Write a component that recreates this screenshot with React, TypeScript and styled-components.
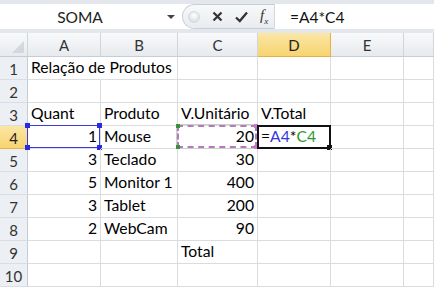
import React from "react";
import styled, { createGlobalStyle, css } from "styled-components";

const GlobalStyle = createGlobalStyle`
  html, body { margin: 0; padding: 0; background: #fff; }
  body { font-family: Lato, "Liberation Sans", sans-serif; overflow: hidden; }
`;

const Window = styled.div`
  width: 434px;
  height: 287px;
  overflow: hidden;
  background: #fff;
`;

const FormulaBar = styled.div`
  display: flex;
  align-items: stretch;
  height: 25px;
  border-top: 4px solid #e3e7ec;
  border-bottom: 4px solid #e3e7ec;
  background: #fff;
`;

const NameBox = styled.div`
  width: 160px;
  display: flex;
  align-items: center;
  justify-content: center;
  font-size: 15.5px;
  color: #222;
`;

const DropArrow = styled.div`
  width: 22px;
  display: flex;
  align-items: center;
  justify-content: center;
  &::after {
    content: "";
    border-left: 4px solid transparent;
    border-right: 4px solid transparent;
    border-top: 4px solid #444;
  }
`;

const ButtonGroup = styled.div`
  width: 92px;
  flex-shrink: 0;
  display: flex;
  align-items: center;
  gap: 12px;
  padding-left: 5px;
  background: linear-gradient(#f7f8fa, #e9ecf0);
  border: 1px solid #c9ced6;
  border-right: none;
  border-radius: 13px 0 0 13px;
  box-sizing: border-box;
`;

const Grip = styled.span`
  width: 10px;
  height: 10px;
  flex-shrink: 0;
  border-radius: 50%;
  background: radial-gradient(circle at 50% 35%, #fff, #cfd4da);
  border: 1px solid #d5d9df;
`;

const FxText = styled.span`
  font-family: "Liberation Serif", serif;
  font-style: italic;
  font-size: 15px;
  color: #333;
  white-space: nowrap;
`;

const FxSub = styled.sub`
  font-size: 9px;
`;

const FormulaInput = styled.div`
  flex: 1;
  display: flex;
  align-items: center;
  padding-left: 15px;
  font-size: 15.5px;
  color: #111;
  border-left: 1px solid #d5d9df;
`;

const Sheet = styled.div`
  display: grid;
  grid-template-columns: 28px 73px 77px 80px 73px 73px 1fr;
  grid-auto-rows: 23px;
  grid-template-rows: 24px;
`;

const Header = styled.div<{ $active?: boolean; $row?: boolean }>`
  display: flex;
  align-items: center;
  justify-content: center;
  font-size: 15px;
  color: #333;
  box-sizing: border-box;
  background: linear-gradient(#f8f9fa, #e7eaee);
  border-right: 1px solid #d0d5db;
  border-bottom: 1px solid #c6ccd4;
  ${(p) =>
    p.$row &&
    css`
      background: #eceff3;
      border-right: 1px solid #c6ccd4;
      border-bottom: 1px solid #dadee3;
      padding-top: 2px;
    `}
  ${(p) =>
    p.$active &&
    css`
      background: linear-gradient(#fbe6a6, #f7d46f);
      border-bottom-color: #e9b04a;
      border-right-color: #e9b04a;
      color: #222;
    `}
`;

const Corner = styled(Header)`
  position: relative;
  &::after {
    content: "";
    position: absolute;
    right: 3px;
    bottom: 3px;
    border-left: 12px solid transparent;
    border-bottom: 12px solid #d3d8de;
  }
`;

const Cell = styled.div<{ $num?: boolean; $spill?: boolean }>`
  position: relative;
  display: flex;
  align-items: flex-end;
  justify-content: ${(p) => (p.$num ? "flex-end" : "flex-start")};
  padding: 0 3px 2px 3px;
  box-sizing: border-box;
  font-size: 15.7px;
  line-height: 19px;
  color: #000;
  white-space: nowrap;
  border-right: 1px solid ${(p) => (p.$spill ? "transparent" : "#dadcdd")};
  border-bottom: 1px solid #dadcdd;
  z-index: ${(p) => (p.$spill ? 2 : 1)};
`;

const RefBox = styled.span`
  position: absolute;
  left: -1px;
  top: -1px;
  right: 0;
  bottom: 0;
  border: 1px solid #3b3bdc;
  pointer-events: none;
`;

const Handle = styled.span<{ $x: "l" | "r"; $y: "t" | "b"; $color: string; $size?: number }>`
  position: absolute;
  width: ${(p) => p.$size ?? 5}px;
  height: ${(p) => p.$size ?? 5}px;
  background: ${(p) => p.$color};
  ${(p) => (p.$x === "l" ? "left: -3px;" : "right: -3px;")}
  ${(p) => (p.$y === "t" ? "top: -3px;" : "bottom: -3px;")}
`;

const Marquee = styled.span`
  position: absolute;
  left: -1px;
  top: -1px;
  right: 0;
  bottom: 0;
  border: 2px dashed #b479b8;
  box-shadow: 0 0 0 1px #c9cfc9;
  pointer-events: none;
`;

const ActiveBox = styled.span`
  position: absolute;
  left: -1px;
  top: -1px;
  right: -1px;
  bottom: -1px;
  border: 2px solid #111;
  pointer-events: none;
`;

const RefA = styled.span`
  color: #3535e0;
`;
const RefC = styled.span`
  color: #2f9a2f;
`;

type CellDef = { v?: React.ReactNode; num?: boolean; spill?: boolean };

const rows: CellDef[][] = [
  [{ v: "Relação de Produtos", spill: true }, {}, {}, {}, {}, {}],
  [{}, {}, {}, {}, {}, {}],
  [{ v: "Quant" }, { v: "Produto" }, { v: "V.Unitário" }, { v: "V.Total" }, {}, {}],
  [{ v: "1", num: true }, { v: "Mouse" }, { v: "20", num: true }, {}, {}, {}],
  [{ v: "3", num: true }, { v: "Teclado" }, { v: "30", num: true }, {}, {}, {}],
  [{ v: "5", num: true }, { v: "Monitor 1" }, { v: "400", num: true }, {}, {}, {}],
  [{ v: "3", num: true }, { v: "Tablet" }, { v: "200", num: true }, {}, {}, {}],
  [{ v: "2", num: true }, { v: "WebCam" }, { v: "90", num: true }, {}, {}, {}],
  [{}, {}, { v: "Total" }, {}, {}, {}],
  [{}, {}, {}, {}, {}, {}],
];

const cols = ["A", "B", "C", "D", "E", ""];

export default function App() {
  return (
    <Window>
      <GlobalStyle />
      <FormulaBar>
        <NameBox>SOMA</NameBox>
        <DropArrow />
        <ButtonGroup>
          <Grip />
          <svg width="11" height="11" viewBox="0 0 11 11">
            <path d="M1.5 1.5 L9.5 9.5 M9.5 1.5 L1.5 9.5" stroke="#333" strokeWidth="2.2" />
          </svg>
          <svg width="13" height="12" viewBox="0 0 13 12">
            <path d="M1 6.5 L4.8 10 L12 1.5" stroke="#333" strokeWidth="2.3" fill="none" />
          </svg>
          <FxText>
            f<FxSub>x</FxSub>
          </FxText>
        </ButtonGroup>
        <FormulaInput>=A4*C4</FormulaInput>
      </FormulaBar>
      <Sheet>
        <Corner />
        {cols.map((c, i) => (
          <Header key={i} $active={c === "D"}>
            {c}
          </Header>
        ))}
        {rows.map((r, ri) => (
          <React.Fragment key={ri}>
            <Header $row $active={ri === 3}>
              {ri + 1}
            </Header>
            {r.map((cell, ci) => {
              const isA4 = ri === 3 && ci === 0;
              const isC4 = ri === 3 && ci === 2;
              const isD4 = ri === 3 && ci === 3;
              return (
                <Cell key={ci} $num={cell.num} $spill={cell.spill}>
                  {isD4 ? (
                    <span>
                      =<RefA>A4</RefA>*<RefC>C4</RefC>
                    </span>
                  ) : (
                    cell.v
                  )}
                  {isA4 && (
                    <RefBox>
                      <Handle $x="l" $y="t" $color="#2a2ae0" />
                      <Handle $x="r" $y="t" $color="#2a2ae0" />
                      <Handle $x="l" $y="b" $color="#2a2ae0" />
                      <Handle $x="r" $y="b" $color="#2a2ae0" />
                    </RefBox>
                  )}
                  {isC4 && (
                    <Marquee>
                      <Handle $x="l" $y="t" $color="#3a8f3a" $size={4} />
                      <Handle $x="r" $y="t" $color="#c77bc7" $size={4} />
                      <Handle $x="l" $y="b" $color="#3a8f3a" $size={4} />
                      <Handle $x="r" $y="b" $color="#c77bc7" $size={4} />
                    </Marquee>
                  )}
                  {isD4 && (
                    <ActiveBox>
                      <Handle $x="r" $y="b" $color="#111" $size={5} />
                    </ActiveBox>
                  )}
                </Cell>
              );
            })}
          </React.Fragment>
        ))}
      </Sheet>
    </Window>
  );
}
